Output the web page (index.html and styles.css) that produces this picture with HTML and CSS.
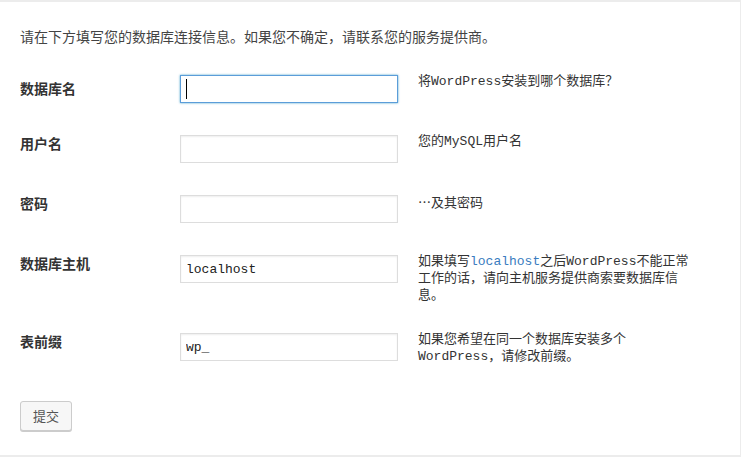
FILE: index.html
```
<!DOCTYPE html>
<html lang="zh-CN">
<head>
<meta charset="utf-8">
<title>WordPress › 安装配置文件</title>
<link rel="stylesheet" href="styles.css">
</head>
<body>
<div class="page">
  <p class="intro">请在下方填写您的数据库连接信息。如果您不确定，请联系您的服务提供商。</p>
  <form class="setup-form">
    <div class="row row-first">
      <label class="label" for="dbname">数据库名</label>
      <span class="field-wrap caret"><input class="field field-focus" id="dbname" type="text" value=""></span>
      <div class="desc">将WordPress安装到哪个数据库？</div>
    </div>
    <div class="row">
      <label class="label" for="uname">用户名</label>
      <span class="field-wrap"><input class="field" id="uname" type="text" value=""></span>
      <div class="desc">您的MySQL用户名</div>
    </div>
    <div class="row">
      <label class="label" for="pwd">密码</label>
      <span class="field-wrap"><input class="field" id="pwd" type="text" value=""></span>
      <div class="desc"><span class="cjk">…</span>及其密码</div>
    </div>
    <div class="row">
      <label class="label" for="dbhost">数据库主机</label>
      <span class="field-wrap"><input class="field" id="dbhost" type="text" value="localhost"></span>
      <div class="desc">如果填写<code class="code">localhost</code>之后WordPress不能正常工作的话，请向主机服务提供商索要数据库信息。</div>
    </div>
    <div class="row">
      <label class="label" for="prefix">表前缀</label>
      <span class="field-wrap"><input class="field" id="prefix" type="text" value="wp_"></span>
      <div class="desc">如果您希望在同一个数据库安装多个WordPress，请修改前缀。</div>
    </div>
    <div class="actions">
      <button class="button" type="button">提交</button>
    </div>
  </form>
</div>
</body>
</html>
```

FILE: styles.css
```
html, body {
  margin: 0;
  padding: 0;
}

body {
  background: #ececec;
  font-family: "Noto Sans CJK SC", "Noto Sans", sans-serif;
  color: #444;
}

.page {
  background: #fff;
  margin: 2px 1px 0 0;
  min-height: 453px;
  box-sizing: border-box;
  padding: 24px 20px 0 20px;
}

.intro {
  margin: 0;
  font-size: 14px;
  line-height: 20px;
  color: #444;
}

.setup-form {
  margin: 27px 0 0 0;
}

.row {
  display: flex;
  align-items: flex-start;
  min-height: 60px;
  box-sizing: border-box;
  padding-bottom: 27px;
}

.label {
  width: 160px;
  flex: none;
  font-size: 14px;
  line-height: 20px;
  font-weight: 700;
  color: #333;
}

.row-first .label {
  margin-top: 5px;
}

.field-wrap {
  position: relative;
  display: block;
  flex: none;
  width: 218px;
  margin: 2px 20px 0 0;
}

.field {
  display: block;
  width: 218px;
  height: 28px;
  box-sizing: border-box;
  margin: 0;
  padding: 0 5px;
  border: 1px solid #ddd;
  border-radius: 0;
  box-shadow: inset 0 1px 2px rgba(0, 0, 0, 0.07);
  background: #fff;
  font-family: "Liberation Mono", "Noto Sans CJK SC", monospace;
  font-size: 13px;
  color: #222;
  outline: none;
}

.field-focus {
  border-color: #5b9dd9;
  box-shadow: 0 0 2px rgba(30, 140, 190, 0.8);
}

.caret::after {
  content: "";
  position: absolute;
  left: 6px;
  top: 4px;
  width: 1px;
  height: 20px;
  background: #000;
}

.desc {
  width: 274px;
  flex: none;
  font-family: "Liberation Mono", "Noto Sans CJK SC", monospace;
  font-size: 13px;
  line-height: 17px;
  color: #333;
}

.cjk {
  font-family: "Noto Sans CJK SC", sans-serif;
}

.code {
  font-family: "Liberation Mono", monospace;
  font-size: 13px;
  color: #3a7cc0;
}

.actions {
  margin-top: 9px;
}

.button {
  display: block;
  height: 30px;
  box-sizing: border-box;
  margin: 0;
  padding: 0 12px;
  border: 1px solid #cccccc;
  border-radius: 3px;
  background: #f7f7f7;
  box-shadow: 0 1px 0 #cccccc;
  font-family: "Noto Sans CJK SC", sans-serif;
  font-size: 13px;
  line-height: 28px;
  color: #555;
  cursor: pointer;
}
```
